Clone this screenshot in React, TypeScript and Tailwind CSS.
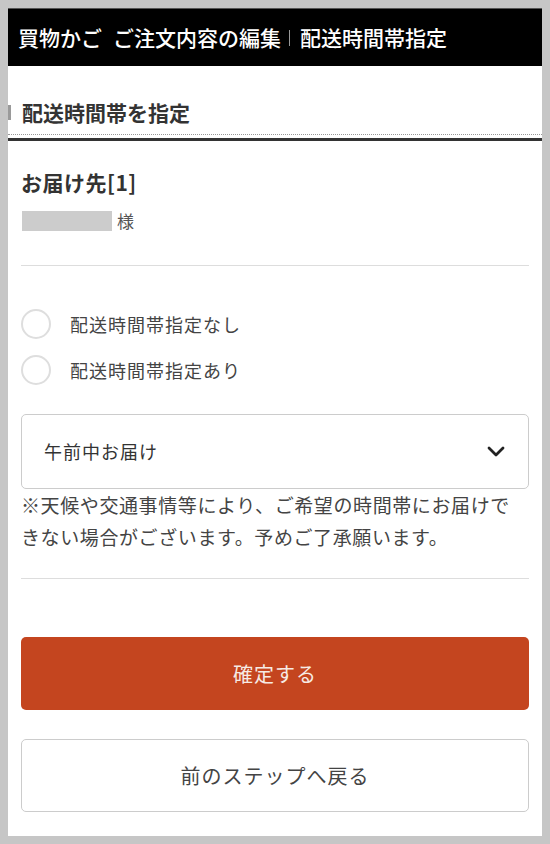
export default function App() {
  return (
    <div className="w-[550px] min-h-[844px] bg-[#c6c6c6] p-[8px] font-['Noto_Sans_CJK_JP','Noto_Sans',sans-serif]">
      <div className="flex h-[828px] flex-col bg-white">
        <header className="flex h-[58px] items-center border-t border-[#555] bg-black pl-[10px] text-[21px] font-medium leading-none text-white">
          <span>買物かご</span>
          <span className="ml-[11px]">ご注文内容の編集</span>
          <span className="ml-[8px] mr-[10px] h-[16px] w-px bg-[#999]" />
          <span>配送時間帯指定</span>
        </header>

        <div className="flex items-center border-b border-dotted border-[#999] pb-[10px] pt-[34px]">
          <span className="h-[15px] w-[3px] bg-[#9a9a9a]" />
          <h2 className="ml-[11px] text-[21px] font-bold leading-[24px] text-[#333]">配送時間帯を指定</h2>
        </div>
        <div className="mt-[3px] h-[3px] bg-[#333]" />

        <div className="px-[13px]">
          <h3 className="mt-[27px] text-[21px] font-bold leading-[28px] tracking-[0.5px] text-[#333]">お届け先[1]</h3>
          <div className="mt-[13px] flex h-[24px] items-center">
            <span className="ml-[1px] h-[20px] w-[90px] bg-[#cccccc]" />
            <span className="ml-[5px] text-[17px] text-[#555]">様</span>
          </div>

          <div className="mt-[32px] h-px bg-[#dddddd]" />

          <div className="mt-[43px] flex flex-col gap-[16px]">
            <label className="flex h-[30px] items-center">
              <span className="h-[30px] w-[30px] rounded-full border-2 border-[#dedede]" />
              <span className="ml-[19px] text-[18px] tracking-[1px] text-[#444]">配送時間帯指定なし</span>
            </label>
            <label className="flex h-[30px] items-center">
              <span className="h-[30px] w-[30px] rounded-full border-2 border-[#dedede]" />
              <span className="ml-[19px] text-[18px] tracking-[1px] text-[#444]">配送時間帯指定あり</span>
            </label>
          </div>

          <div className="mt-[29px] flex h-[75px] items-center justify-between rounded-[5px] border border-[#cccccc] pl-[22px] pr-[23px]">
            <span className="text-[18px] tracking-[1px] text-[#333]">午前中お届け</span>
            <svg width="18" height="11" viewBox="0 0 18 11" fill="none">
              <polyline points="2,2 9,9 16,2" stroke="#222" strokeWidth="2.8" strokeLinecap="round" strokeLinejoin="round" />
            </svg>
          </div>

          <p className="text-[19px] leading-[32px] tracking-[0.6px] text-[#444]">
            ※天候や交通事情等により、ご希望の時間帯にお届けできない場合がございます。予めご了承願います。
          </p>

          <div className="mt-[25px] h-px bg-[#dddddd]" />

          <button className="mt-[58px] flex h-[73px] w-full items-center justify-center rounded-[5px] bg-[#c4451f] text-[20px] tracking-[1px] text-[#f6ebe5]">
            確定する
          </button>
          <button className="mt-[29px] flex h-[73px] w-full items-center justify-center rounded-[5px] border border-[#cccccc] bg-white text-[20px] tracking-[1px] text-[#444]">
            前のステップへ戻る
          </button>
        </div>
      </div>
    </div>
  );
}
